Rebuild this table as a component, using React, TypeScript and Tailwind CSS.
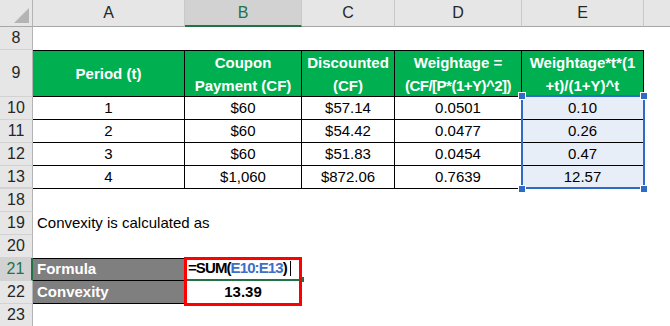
import React from "react";

const rowHead = "flex items-center justify-center bg-[#e6e6e6] border-r border-r-[#b4b4b4] border-b border-b-[#d2d2d2] text-[16px] text-[#262626]";
const colHead = "flex items-center justify-center bg-[#e6e6e6] border-r border-r-[#c8c8c8] border-b border-b-[#a6a6a6] text-[16px] text-[#262626]";
const th = "flex items-center justify-center text-center bg-[#00b050] text-white font-bold leading-[23px] border-t border-r border-b border-black text-[15px]";
const td = "flex items-center justify-center border-r border-b border-black text-[15px] text-black";
const tdE = "flex items-center justify-center border-r border-b border-black text-[15px] text-black bg-[#e8eef8]";
const empty = "";

export default function App() {
  const data = [
    ["10", "1", "$60", "$57.14", "0.0501", "0.10"],
    ["11", "2", "$60", "$54.42", "0.0477", "0.26"],
    ["12", "3", "$60", "$51.83", "0.0454", "0.47"],
    ["13", "4", "$1,060", "$872.06", "0.7639", "12.57"],
  ];
  return (
    <div className="relative w-[670px] h-[326px] overflow-hidden bg-white font-['Liberation_Sans',Arial,sans-serif]">
      <div className="grid grid-cols-[33px_152px_117px_93px_127px_122px_1fr] grid-rows-[27px_23px_47px_23px_23px_23px_23px_23px_23px_23px_23px_23px_23px]">
        {/* column headers */}
        <div className="relative bg-[#e6e6e6] border-r border-r-[#b4b4b4] border-b border-b-[#a6a6a6]">
          <svg className="absolute right-[3px] bottom-[3px]" width="15" height="15" viewBox="0 0 15 15">
            <polygon points="15,0 15,15 0,15" fill="#b4b4b4" />
          </svg>
        </div>
        <div className={colHead}>A</div>
        <div className="flex items-center justify-center bg-[#d2d2d2] border-r border-r-[#c8c8c8] border-b-2 border-b-[#217346] text-[16px] text-[#217346]">B</div>
        <div className={colHead}>C</div>
        <div className={colHead}>D</div>
        <div className={colHead}>E</div>
        <div className="bg-[#e6e6e6] border-b border-b-[#a6a6a6]" />

        {/* row 8 */}
        <div className={rowHead}>8</div>
        <div className={empty} />
        <div className={empty} />
        <div className={empty} />
        <div className={empty} />
        <div className={empty} />
        <div className={empty} />

        {/* row 9 */}
        <div className={rowHead}>9</div>
        <div className={th}>Period (t)</div>
        <div className={th}>
          <div>
            <div className="whitespace-nowrap">Coupon</div>
            <div className="whitespace-nowrap">Payment (CF)</div>
          </div>
        </div>
        <div className={th}>
          <div>
            <div className="whitespace-nowrap">Discounted</div>
            <div className="whitespace-nowrap">(CF)</div>
          </div>
        </div>
        <div className={th}>
          <div>
            <div className="whitespace-nowrap">Weightage =</div>
            <div className="whitespace-nowrap tracking-[-0.5px]">(CF/[P*(1+Y)^2])</div>
          </div>
        </div>
        <div className={th}>
          <div>
            <div className="whitespace-nowrap">Weightage*t*(1</div>
            <div className="whitespace-nowrap">+t)/(1+Y)^t</div>
          </div>
        </div>
        <div className={empty} />

        {/* data rows */}
        {data.map((r, i) => (
          <React.Fragment key={r[0]}>
            <div className={i === 3 ? rowHead + " border-b-2 border-b-[#a0a0a0]" : rowHead}>{r[0]}</div>
            <div className={td}>{r[1]}</div>
            <div className={td}>{r[2]}</div>
            <div className={td}>{r[3]}</div>
            <div className={td}>{r[4]}</div>
            <div className={tdE}>{r[5]}</div>
            <div className={empty} />
          </React.Fragment>
        ))}

        {/* row 18 */}
        <div className={rowHead}>18</div>
        <div className={empty} />
        <div className={empty} />
        <div className={empty} />
        <div className={empty} />
        <div className={empty} />
        <div className={empty} />

        {/* row 19 */}
        <div className={rowHead}>19</div>
        <div className="relative z-10 flex items-center pl-[4px] text-[15px] text-black whitespace-nowrap overflow-visible min-w-0">Convexity is calculated as</div>
        <div className={empty} />
        <div className={empty} />
        <div className={empty} />
        <div className={empty} />
        <div className={empty} />

        {/* row 20 */}
        <div className={rowHead}>20</div>
        <div className={empty} />
        <div className={empty} />
        <div className={empty} />
        <div className={empty} />
        <div className={empty} />
        <div className={empty} />

        {/* row 21 */}
        <div className="flex items-center justify-center bg-[#d2d2d2] border-r-2 border-r-[#217346] border-b border-b-[#d2d2d2] text-[16px] text-[#217346]">21</div>
        <div className="flex items-center pl-[4px] bg-[#7f7f7f] text-white font-bold text-[15px] border-t border-b border-r border-black">Formula</div>
        <div className="relative flex items-center pl-[3px] border-b-2 border-b-[#217346] text-[15px] font-bold tracking-[-0.9px] text-black whitespace-nowrap">
          <span>=SUM(</span>
          <span className="text-[#3c6fc8]">E10:E13</span>
          <span>)</span>
          <span className="ml-[3px] inline-block w-[1px] h-[15px] bg-black" />
        </div>
        <div className={empty} />
        <div className={empty} />
        <div className={empty} />
        <div className={empty} />

        {/* row 22 */}
        <div className={rowHead}>22</div>
        <div className="flex items-center pl-[4px] bg-[#7f7f7f] text-white font-bold text-[15px] border-b border-r border-black">Convexity</div>
        <div className="flex items-center justify-center font-bold text-[15px] text-black border-b border-r border-black">13.39</div>
        <div className={empty} />
        <div className={empty} />
        <div className={empty} />
        <div className={empty} />

        {/* row 23 */}
        <div className={rowHead}>23</div>
        <div className={empty} />
        <div className={empty} />
        <div className={empty} />
        <div className={empty} />
        <div className={empty} />
        <div className={empty} />
      </div>

      {/* selection border on E10:E13 */}
      <div className="absolute left-[521px] top-[95px] w-[124px] h-[94px] border-2 border-[#2f6bc6] pointer-events-none" />
      <div className="absolute left-[519px] top-[93px] w-[6px] h-[6px] bg-[#2f6bc6] outline outline-1 outline-white" />
      <div className="absolute left-[641px] top-[93px] w-[6px] h-[6px] bg-[#2f6bc6] outline outline-1 outline-white" />
      <div className="absolute left-[519px] top-[186px] w-[6px] h-[6px] bg-[#2f6bc6] outline outline-1 outline-white" />
      <div className="absolute left-[641px] top-[186px] w-[6px] h-[6px] bg-[#2f6bc6] outline outline-1 outline-white" />

      {/* green fill handle of active cell */}
      <div className="absolute left-[300px] top-[277px] w-[4px] h-[5px] bg-[#217346]" />

      {/* red highlight box */}
      <div className="absolute left-[184px] top-[257px] w-[118px] h-[49px] border-[3px] border-[#ff0000] pointer-events-none" />
    </div>
  );
}
